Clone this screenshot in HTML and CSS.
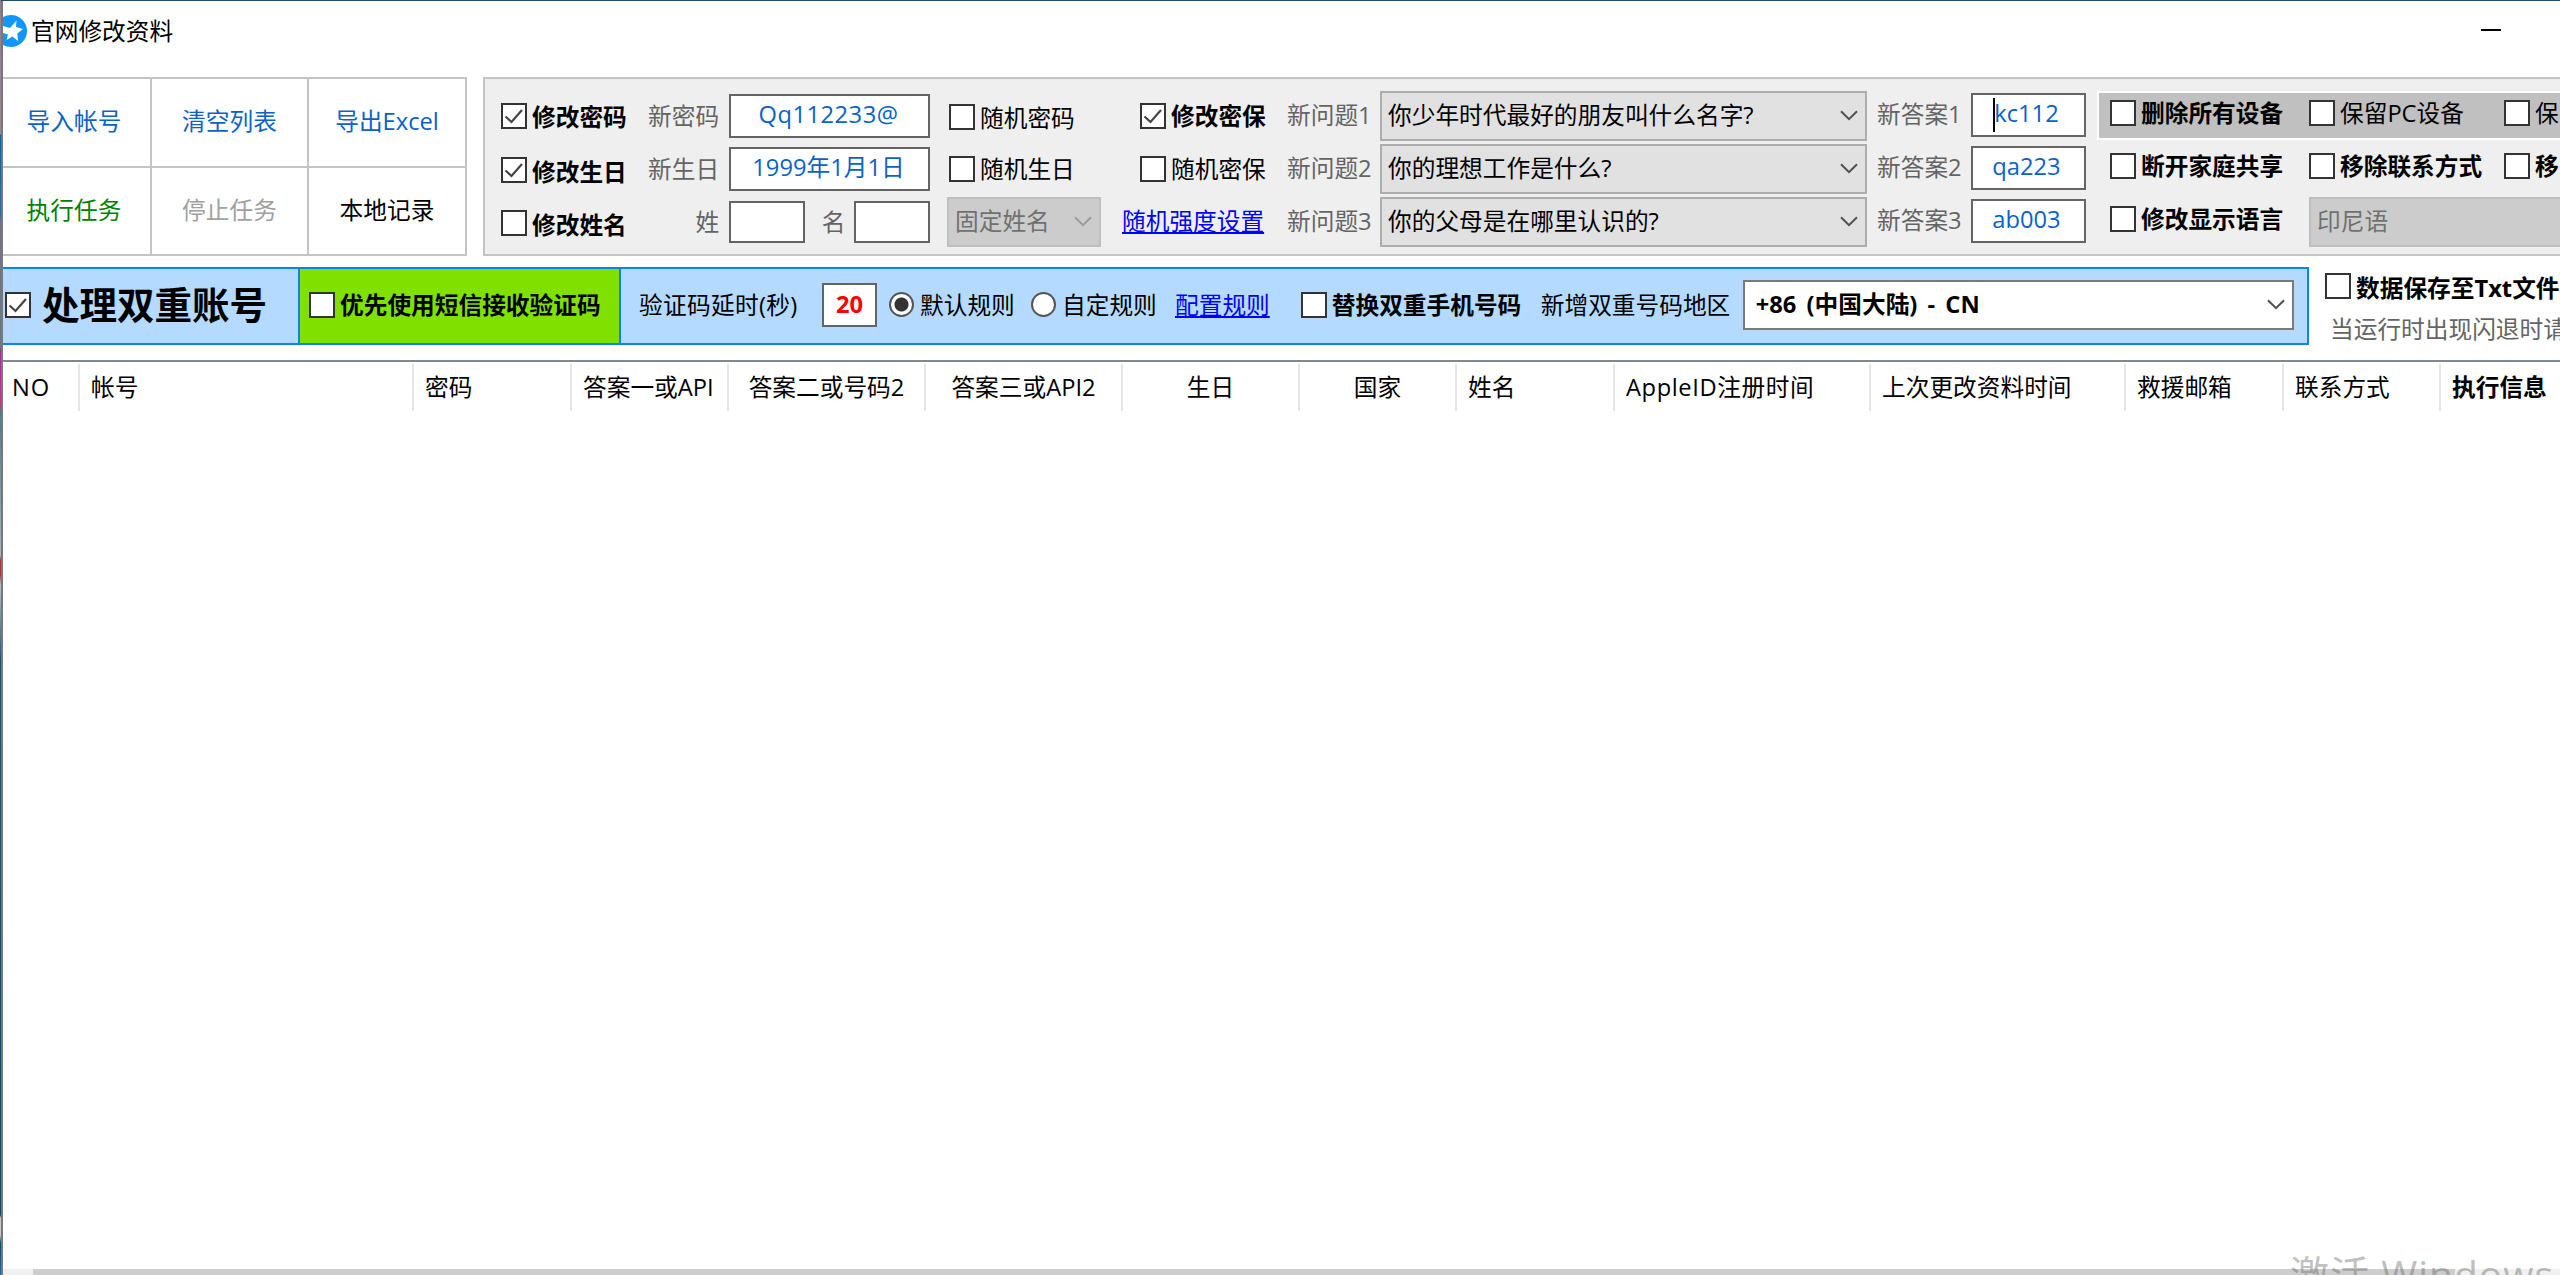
FILE: index.html
```
<!DOCTYPE html>
<html lang="zh-CN">
<head>
<meta charset="UTF-8">
<meta name="viewport" content="width=device-width, initial-scale=1.0">
<title>官网修改资料</title>
<link rel="stylesheet" href="styles.css">
</head>
<body>

<svg class="defs">
  <symbol id="tick" viewBox="0 0 22 22"><path d="M2.5 11.5 L8.5 17 L19 5" fill="none" stroke="#444" stroke-width="2.2"/></symbol>
  <symbol id="arrow" viewBox="0 0 18 11"><path d="M1 1.2 L9 9.2 L17 1.2" fill="none" stroke="currentColor" stroke-width="2"/></symbol>
</svg>

<div class="window">
  <div class="titlebar">
    <svg class="logo" viewBox="0 0 32 32">
      <circle cx="16" cy="16" r="16" fill="#0f97fb"/>
      <path d="M21.5 5.5 L21 12 L28 14 L22.3 18.5 L23 26 L17.5 21.5 L11.5 25 L13 19.5 L5 17 L6 10.5 L15 13 Z" fill="#fff"/>
    </svg>
    <span class="title">官网修改资料</span>
    <span class="minimize"></span>
  </div>

  <div class="toolbar">
    <div class="actions">
      <div class="blue">导入帐号</div>
      <div class="blue">清空列表</div>
      <div class="blue">导出Excel</div>
      <div class="green">执行任务</div>
      <div class="disabled">停止任务</div>
      <div>本地记录</div>
    </div>

    <div class="options">
      <div class="col col-modify">
        <label class="check bold"><i class="box"><svg><use href="#tick"/></svg></i><span>修改密码</span></label>
        <label class="check bold"><i class="box"><svg><use href="#tick"/></svg></i><span>修改生日</span></label>
        <label class="check bold"><i class="box"></i><span>修改姓名</span></label>
      </div>
      <div class="col col-new">
        <span>新密码</span>
        <span>新生日</span>
        <span>姓</span>
      </div>
      <div class="col col-value">
        <div class="field wide">Qq112233@</div>
        <div class="field">1999年1月1日</div>
        <div class="names"><div class="field"></div><span>名</span><div class="field"></div></div>
      </div>
      <div class="col col-random">
        <label class="check"><i class="box"></i><span>随机密码</span></label>
        <label class="check"><i class="box"></i><span>随机生日</span></label>
        <div class="select off">固定姓名<svg class="arrow"><use href="#arrow"/></svg></div>
      </div>
      <div class="col col-security">
        <label class="check bold"><i class="box"><svg><use href="#tick"/></svg></i><span>修改密保</span></label>
        <label class="check"><i class="box"></i><span>随机密保</span></label>
        <a class="link">随机强度设置</a>
      </div>
      <div class="col col-question">
        <span>新问题1</span>
        <span>新问题2</span>
        <span>新问题3</span>
      </div>
      <div class="col col-pick">
        <div class="select">你少年时代最好的朋友叫什么名字?<svg class="arrow"><use href="#arrow"/></svg></div>
        <div class="select">你的理想工作是什么?<svg class="arrow"><use href="#arrow"/></svg></div>
        <div class="select">你的父母是在哪里认识的?<svg class="arrow"><use href="#arrow"/></svg></div>
      </div>
      <div class="col col-answer">
        <span>新答案1</span>
        <span>新答案2</span>
        <span>新答案3</span>
      </div>
      <div class="col col-reply">
        <div class="field"><i class="caret"></i>kc112</div>
        <div class="field">qa223</div>
        <div class="field">ab003</div>
      </div>
      <div class="col col-extra">
        <div class="extra shaded">
          <label class="check bold"><i class="box"></i><span>删除所有设备</span></label>
          <label class="check"><i class="box"></i><span>保留PC设备</span></label>
          <label class="check"><i class="box"></i><span>保</span></label>
        </div>
        <div class="extra">
          <label class="check bold"><i class="box"></i><span>断开家庭共享</span></label>
          <label class="check bold"><i class="box"></i><span>移除联系方式</span></label>
          <label class="check bold"><i class="box"></i><span>移</span></label>
        </div>
        <div class="extra language">
          <label class="check bold"><i class="box"></i><span>修改显示语言</span></label>
          <div class="select off">印尼语</div>
        </div>
      </div>
    </div>
  </div>

  <div class="secondbar">
    <div class="double">
      <div class="main-check">
        <label class="check"><i class="box"><svg><use href="#tick"/></svg></i><span class="big">处理双重账号</span></label>
      </div>
      <div class="sms">
        <label class="check bold"><i class="box"></i><span>优先使用短信接收验证码</span></label>
      </div>
      <div class="rules">
        <span class="delay-label">验证码延时(秒)</span>
        <div class="field delay">20</div>
        <label class="check rule"><i class="radio on"></i><span>默认规则</span></label>
        <label class="check rule"><i class="radio"></i><span>自定规则</span></label>
        <a class="link">配置规则</a>
        <label class="check bold replace"><i class="box"></i><span>替换双重手机号码</span></label>
        <span class="region-label">新增双重号码地区</span>
        <div class="select region">+86 (中国大陆) - CN<svg class="arrow"><use href="#arrow"/></svg></div>
      </div>
    </div>
    <div class="save">
      <label class="check bold"><i class="box"></i><span>数据保存至Txt文件</span></label>
      <p>当运行时出现闪退时请</p>
    </div>
  </div>

  <div class="list">
    <div class="list-head">
      <div class="no">NO</div>
      <div>帐号</div>
      <div>密码</div>
      <div>答案一或API</div>
      <div class="center">答案二或号码2</div>
      <div class="center">答案三或API2</div>
      <div class="center">生日</div>
      <div class="center">国家</div>
      <div>姓名</div>
      <div class="apple">AppleID注册时间</div>
      <div>上次更改资料时间</div>
      <div>救援邮箱</div>
      <div>联系方式</div>
      <div class="bold">执行信息</div>
    </div>
    <div class="list-body"></div>
    <div class="scrollbar"><div class="thumb"></div></div>
  </div>
</div>

<div class="watermark">激活 Windows</div>

</body>
</html>
```
FILE: styles.css
```
* { box-sizing: border-box; }
body {
  margin: 0;
  height: 1275px;
  overflow: hidden;
  padding: 1px 0 0 1px;
  background: linear-gradient(180deg, #8a7f92 0, #9a8c96 134px, #0a5f9e 135px, #2a6ca8 215px, #77728a 225px, #6c7680 345px, #a030a0 352px, #c03090 405px, #4a7a96 410px, #a9b4bc 555px, #b03434 560px, #b03434 575px, #b8c2c8 585px, #1c5478 660px, #0a4a6c 1215px, #c8c8c8 1218px, #c8c8c8 1235px, #0a4a6c 1243px, #1a6ab0 100%);
  font-family: "Open Sans", "Noto Sans CJK SC", sans-serif;
  font-size: 23.7px;
  line-height: 32px;
  color: #000;
}
.defs { position: absolute; width: 0; height: 0; }
.bold { font-weight: bold; }
.blue { color: #0a62c8; }
.green { color: #008000; }
.disabled { color: #a0a0a0; }

.window {
  display: flex;
  flex-direction: column;
  height: 1274px;
  border-left: 2px solid #787878;
  background: #fff;
  box-shadow: 0 -1px 0 #1f4a70;
  white-space: nowrap;
}

.titlebar { display: flex; align-items: center; height: 76px; padding-bottom: 16px; overflow: hidden; }
.logo { width: 32px; height: 32px; margin-left: -8px; flex: none; }
.title { margin-left: 4px; }
.minimize { width: 20px; height: 2px; margin: 0 59px 3px auto; background: #000; }

.toolbar { display: flex; gap: 16px; height: 179px; }
.actions {
  display: grid;
  grid-template-columns: 149px 157px 158px;
  grid-template-rows: 89px 88px;
  flex: none;
  border-top: 2px solid #c4c4c4;
}
.actions div {
  display: flex;
  align-items: center;
  justify-content: center;
  padding-bottom: 3px;
  border-right: 2px solid #c4c4c4;
  border-bottom: 2px solid #c4c4c4;
}
.actions div:nth-child(3n+1) { padding-right: 5px; }

.options {
  display: flex;
  flex: 1;
  min-width: 0;
  overflow: hidden;
  padding-top: 10px;
  border: 2px solid #c4c4c4;
  border-right: 0;
  background: #efefef;
}
.col { display: grid; grid-template-rows: 53px 53px 53px; align-items: center; flex: none; }
.check { display: flex; align-items: center; gap: 5px; }
.check span { padding-top: 1px; }
.box {
  display: block;
  flex: none;
  width: 26px;
  height: 26px;
  border: 2px solid #333;
  background: #fff;
}
.box svg { display: block; width: 22px; height: 22px; }
.field {
  display: flex;
  position: relative;
  align-items: center;
  justify-content: center;
  height: 44px;
  padding: 0 2px 3px 0;
  border: 2px solid #646464;
  background: #fff;
  color: #0a62c8;
}
.field.wide { letter-spacing: 0.5px; padding-right: 2px; }
.select {
  display: flex;
  align-items: center;
  justify-content: space-between;
  height: 50px;
  padding: 0 7px 1px 6px;
  border: 2px solid #adadad;
  background: #e1e1e1;
}
.arrow { width: 18px; height: 11px; color: #505050; }
.select.off { background: #ccc; border-color: #bfbfbf; color: #707070; }
.select.off .arrow { color: #9c9c9c; }
.link { color: #0000ff; text-decoration: underline; }

.col-modify { width: 163px; padding-left: 16px; }
.col-modify .check + .check { margin-top: 3px; }
.col-modify .check span { padding-top: 3px; }
.col-new { width: 81px; padding-right: 10px; text-align: right; color: #646464; }
.col-value { width: 201px; }
.names { display: flex; align-items: center; justify-content: space-between; color: #646464; }
.names .field { width: 76px; height: 42px; }
.names span { margin-left: 8px; }
.col-random { width: 193px; padding-left: 19px; }
.col-random .check:first-child { margin-top: 3px; }
.col-random .select { width: 154px; margin-left: -2px; }
.col-security { width: 164px; }
.col-security .check { margin-left: 17px; }
.col-security .link { margin: -2px 0 0 -1px; }
.col-question { width: 93px; color: #646464; }
.col-question span { margin-top: -1px; }
.col-pick { width: 487px; }
.col-answer { width: 104px; padding-left: 10px; color: #646464; }
.col-answer span { margin-top: -4px; }
.col-reply { width: 115px; }
.col-reply .field { margin-top: -2px; padding-right: 4px; }
.caret { position: absolute; left: 20px; top: 3px; width: 2px; height: 34px; background: #000; }
.col-extra { margin-left: 11px; width: 560px; }
.extra { display: grid; grid-template-columns: 199px 195px 166px; align-items: center; height: 49px; padding: 0 0 5px 13px; }
.extra.shaded { padding-left: 11px; border: 2px solid #fff; background: #c0c0c0; }
.extra .check span { padding-top: 0; }
.extra.language { height: 50px; padding-bottom: 0; }
.extra.language .check { margin-bottom: 5px; }
.extra .select { grid-column: span 2; }

.secondbar { display: flex; margin-top: 11px; height: 78px; flex: none; }
.double {
  display: flex;
  flex: none;
  width: 2306px;
  border: 2px solid #0a84f5;
  border-left: 0;
  background: #b4daff;
}
.double > div { display: flex; align-items: center; padding-bottom: 3px; }
.main-check { width: 295px; padding-left: 2px; }
.main-check .check { gap: 11px; }
.big { font-size: 37.5px; font-weight: bold; line-height: 40px; }
.double .check span { padding-top: 0; }
.double .check .big { padding-top: 1px; }
.sms { width: 323px; padding-left: 9px; border: solid #0a84f5; border-width: 0 2px; background: #80e000; }
.rules { flex: 1; }
.delay-label { width: 201px; padding-left: 18px; letter-spacing: 0.3px; }
.field.delay { width: 55px; color: #f00; font-weight: bold; padding: 0 0 1px; }
.rule { width: 142px; margin-left: 12px; gap: 6px; }
.rule + .rule { margin-left: 0; width: 144px; }
.radio { width: 25px; height: 25px; flex: none; border: 2px solid #555; border-radius: 50%; background: #fff; }
.radio.on { background: radial-gradient(circle, #333 6.5px, #fff 7.5px); }
.replace { margin-left: 31px; width: 240px; }
.region-label { width: 202px; }
.select.region { width: 551px; border-color: #7a7a7a; background: #fff; font-weight: bold; padding-left: 11px; word-spacing: 4px; }

.save { padding: 6px 0 0 16px; flex: none; }
.save .check { height: 26px; }
.save .check span { padding-top: 3px; }
.save p { margin: 14px 0 0 5px; color: #646464; }

.list { display: flex; flex-direction: column; flex: 1; margin-top: 15px; border-top: 2px solid #828790; }
.list-head {
  display: grid;
  grid-template-columns: 77px 334px 158px 157px 197px 197px 177px 157px 158px 256px 255px 158px 157px 1fr;
  height: 47px;
  margin-top: 2px;
  overflow: hidden;
}
.list-head div { padding: 7px 0 0 11px; border-right: 2px solid #e5e5e5; }
.list-head .no { padding-left: 9px; letter-spacing: 1px; }
.list-head .apple { letter-spacing: 0.6px; }
.list-head .center { padding-left: 0; text-align: center; }
.list-head div:last-child { border-right: 0; }
.list-body { flex: 1; }
.scrollbar { height: 6px; padding-left: 30px; background: #f0f0f0; }
.thumb { width: 2422px; height: 6px; background: #cdcdcd; }

.watermark {
  position: absolute;
  left: 2290px;
  top: 1250px;
  height: 25px;
  overflow: hidden;
  font-size: 39px;
  line-height: 48px;
  letter-spacing: 1px;
  color: rgba(100, 100, 100, 0.42);
  white-space: nowrap;
}
```
